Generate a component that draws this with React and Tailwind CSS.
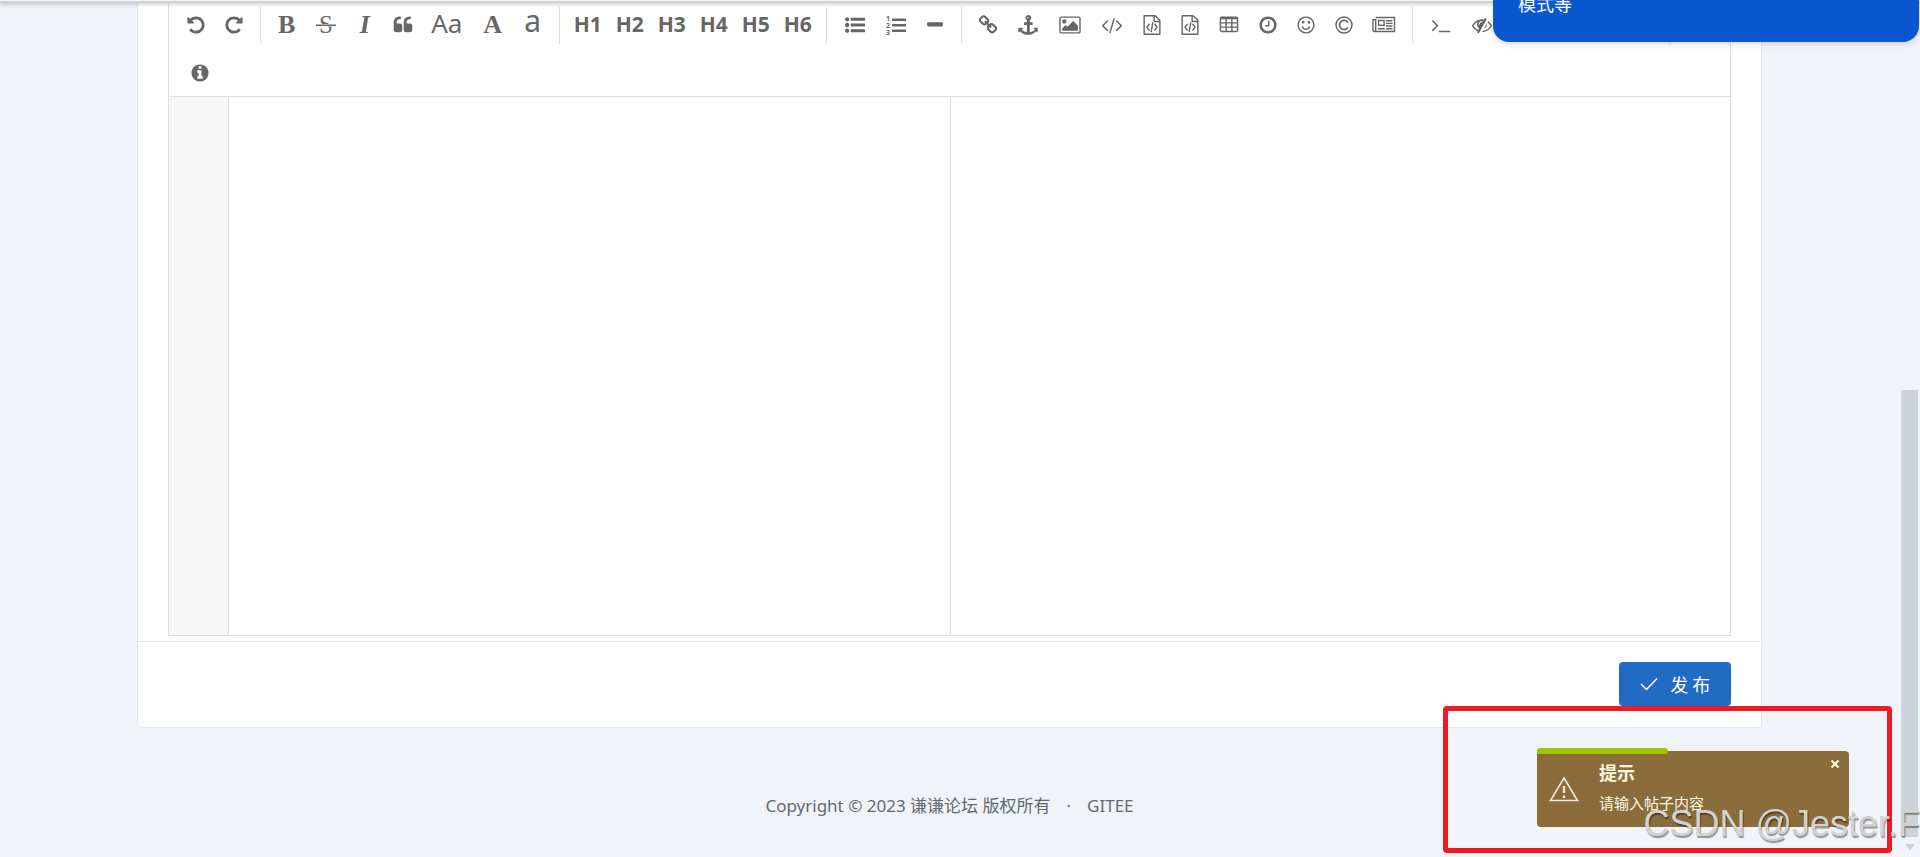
import clsx from 'clsx';

const ICONS = {
  undo: 'M1664 896q0 156-61 298t-164 245-245 164-298 61q-172 0-327-72.5t-264-204.5q-7-10-6.5-22.5t8.5-20.5l137-138q10-9 25-9 16 2 23 12 73 95 179 147t225 52q104 0 198.5-40.5t163.5-109.5 109.5-163.5 40.5-198.5-40.5-198.5-109.5-163.5-163.5-109.5-198.5-40.5q-98 0-188 35.5t-160 101.5l137 138q31 30 14 69-17 40-59 40h-448q-26 0-45-19t-19-45v-448q0-42 40-59 39-17 69 14l130 129q107-101 244.5-156.5t284.5-55.5q156 0 298 61t245 164 164 245 61 298z',
  redo: 'M1664 256v448q0 26-19 45t-45 19h-448q-42 0-59-40-17-39 14-69l138-138q-148-137-349-137-104 0-198.5 40.5t-163.5 109.5-109.5 163.5-40.5 198.5 40.5 198.5 109.5 163.5 163.5 109.5 198.5 40.5q119 0 225-52t179-147q7-10 23-12 15 0 25 9l137 138q9 8 9.5 20.5t-7.5 22.5q-109 132-264 204.5t-327 72.5q-156 0-298-61t-245-164-164-245-61-298 61-298 164-245 245-164 298-61q147 0 284.5 55.5t244.5 156.5l130-129q29-31 70-14 39 17 39 59z',
  quote: 'M832 960v384q0 80-56 136t-136 56h-384q-80 0-136-56t-56-136v-704q0-104 40.5-198.5t109.5-163.5 163.5-109.5 198.5-40.5h64q26 0 45 19t19 45v128q0 26-19 45t-45 19h-64q-106 0-181 75t-75 181v32q0 40 28 68t68 28h224q80 0 136 56t56 136zM1728 960v384q0 80-56 136t-136 56h-384q-80 0-136-56t-56-136v-704q0-104 40.5-198.5t109.5-163.5 163.5-109.5 198.5-40.5h64q26 0 45 19t19 45v128q0 26-19 45t-45 19h-64q-106 0-181 75t-75 181v32q0 40 28 68t68 28h224q80 0 136 56t56 136z',
  listUl: 'M384 1408q0 80-56 136t-136 56-136-56-56-136 56-136 136-56 136 56 56 136zm0-512q0 80-56 136t-136 56-136-56-56-136 56-136 136-56 136 56 56 136zm1408 416v192q0 13-9.5 22.5t-22.5 9.5h-1216q-13 0-22.5-9.5t-9.5-22.5v-192q0-13 9.5-22.5t22.5-9.5h1216q13 0 22.5 9.5t9.5 22.5zm-1408-928q0 80-56 136t-136 56-136-56-56-136 56-136 136-56 136 56 56 136zm1408 416v192q0 13-9.5 22.5t-22.5 9.5h-1216q-13 0-22.5-9.5t-9.5-22.5v-192q0-13 9.5-22.5t22.5-9.5h1216q13 0 22.5 9.5t9.5 22.5zm0-512v192q0 13-9.5 22.5t-22.5 9.5h-1216q-13 0-22.5-9.5t-9.5-22.5v-192q0-13 9.5-22.5t22.5-9.5h1216q13 0 22.5 9.5t9.5 22.5z',
  minus: 'M1600 736v192q0 40-28 68t-68 28h-1216q-40 0-68-28t-28-68v-192q0-40 28-68t68-28h1216q40 0 68 28t28 68z',
  link: 'M1520 1216q0-40-28-68l-208-208q-28-28-68-28-42 0-72 32 3 3 19 18.5t21.5 21.5 15 19 13 25.5 3.5 27.5q0 40-28 68t-68 28q-15 0-27.5-3.5t-25.5-13-19-15-21.5-21.5-18.5-19q-33 31-33 73 0 40 28 68l206 207q27 27 68 27 40 0 68-26l147-146q28-28 28-67zm-703-705q0-40-28-68l-206-207q-28-28-68-28-39 0-68 27l-147 146q-28 28-28 67 0 40 28 68l208 208q27 27 68 27 42 0 72-31-3-3-19-18.5t-21.5-21.5-15-19-13-25.5-3.5-27.5q0-40 28-68t68-28q15 0 27.5 3.5t25.5 13 19 15 21.5 21.5 18.5 19q33-31 33-73zm895 705q0 120-85 203l-147 146q-83 83-203 83-121 0-204-85l-206-207q-83-83-83-203 0-123 88-209l-88-88q-86 88-208 88-120 0-204-84l-208-208q-84-84-84-204t85-203l147-146q83-83 203-83 121 0 204 85l206 207q83 83 83 203 0 123-88 209l88 88q86-88 208-88 120 0 204 84l208 208q84 84 84 204z',
  anchor: 'M960 256q0-26-19-45t-45-19-45 19-19 45 19 45 45 19 45-19 19-45zm800 928v352q0 22-20 30-8 2-12 2-13 0-23-9l-93-93q-119 143-318.5 226.5t-397.5 83.5-397.5-83.5-318.5-226.5l-93 93q-9 9-23 9-4 0-12-2-20-8-20-30v-352q0-14 9-23t23-9h352q22 0 30 20 8 19-7 35l-100 100q67 91 189.5 153.5t271.5 82.5v-647h-192q-26 0-45-19t-19-45v-128q0-26 19-45t45-19h192v-163q-58-34-93-92.5t-35-128.5q0-106 75-181t181-75 181 75 75 181q0 70-35 128.5t-93 92.5v163h192q26 0 45 19t19 45v128q0 26-19 45t-45 19h-192v647q149-20 271.5-82.5t189.5-153.5l-100-100q-15-16-7-35 8-20 30-20h352q14 0 23 9t9 23z',
  code: 'M553 1399l-50 50q-10 10-23 10t-23-10l-466-466q-10-10-10-23t10-23l466-466q10-10 23-10t23 10l50 50q10 10 10 23t-10 23l-393 393 393 393q10 10 10 23t-10 23zm591-1067l-373 1291q-4 13-15.5 19.5t-23.5 2.5l-62-17q-13-4-19.5-15.5t-2.5-24.5l373-1291q4-13 15.5-19.5t23.5-2.5l62 17q13 4 19.5 15.5t2.5 24.5zm657 651l-466 466q-10 10-23 10t-23-10l-50-50q-10-10-10-23t10-23l393-393-393-393q-10-10-10-23t10-23l50-50q10-10 23-10t23 10l466 466q10 10 10 23t-10 23z',
  image: 'M576 576q0 80-56 136t-136 56-136-56-56-136 56-136 136-56 136 56 56 136zm1024 384v448h-1408v-192l320-320 160 160 512-512zm96-704h-1600q-13 0-22.5 9.5t-9.5 22.5v1216q0 13 9.5 22.5t22.5 9.5h1600q13 0 22.5-9.5t9.5-22.5v-1216q0-13-9.5-22.5t-22.5-9.5zm160 32v1216q0 66-47 113t-113 47h-1600q-66 0-113-47t-47-113v-1216q0-66 47-113t113-47h1600q66 0 113 47t47 113z',
  fileCode: 'M1596 380q28 28 48 76t20 88v1152q0 40-28 68t-68 28h-1344q-40 0-68-28t-28-68v-1600q0-40 28-68t68-28h896q40 0 88 20t76 48zm-444-244v376h376q-10-29-22-41l-313-313q-12-12-41-22zm384 1528v-1024h-416q-40 0-68-28t-28-68v-416h-768v1536h1280zM608 768q8-11 21-12.5t24 6.5l51 38q11 8 12.5 21t-6.5 24l-182 243 182 243q8 11 6.5 24t-12.5 21l-51 38q-11 8-24 6.5t-21-12.5l-226-301q-14-19 0-38zm802 301q14 19 0 38l-226 301q-8 11-21 12.5t-24-6.5l-51-38q-11-8-12.5-21t6.5-24l182-243-182-243q-8-11-6.5-24t12.5-21l51-38q11-8 24-6.5t21 12.5zm-620 461q-13-2-20.5-13t-5.5-24l138-831q2-13 13-20.5t24-5.5l63 10q13 2 20.5 13t5.5 24l-138 831q-2 13-13 20.5t-24 5.5z',
  table: 'M1728 288v1088q0 66-47 113t-113 47h-1344q-66 0-113-47t-47-113v-1088q0-66 47-113t113-47h1344q66 0 113 47t47 113zM192 384v256h384v-256zM704 384v256h384v-256zM1216 384v256h384v-256zM192 768v256h384v-256zM704 768v256h384v-256zM1216 768v256h384v-256zM192 1152v256h384v-256zM704 1152v256h384v-256zM1216 1152v256h384v-256z',
  clock: 'M1024 544v448q0 14-9 23t-23 9h-320q-14 0-23-9t-9-23v-64q0-14 9-23t23-9h224v-352q0-14 9-23t23-9h64q14 0 23 9t9 23zm416 352q0-148-73-273t-198-198-273-73-273 73-198 198-73 273 73 273 198 198 273 73 273-73 198-198 73-273zm224 0q0 209-103 385.5t-279.5 279.5-385.5 103-385.5-103-279.5-279.5-103-385.5 103-385.5 279.5-279.5 385.5-103 385.5 103 279.5 279.5 103 385.5z',
  smile: 'M1262 1075q-37 121-138 195t-228 74-228-74-138-195q-8-25 4-48.5t38-31.5q25-8 48.5 4t31.5 38q25 80 92.5 129.5t151.5 49.5 151.5-49.5 92.5-129.5q8-26 32-38t49-4 37 31.5 4 48.5zm-494-435q0 53-37.5 90.5t-90.5 37.5-90.5-37.5-37.5-90.5 37.5-90.5 90.5-37.5 90.5 37.5 37.5 90.5zm512 0q0 53-37.5 90.5t-90.5 37.5-90.5-37.5-37.5-90.5 37.5-90.5 90.5-37.5 90.5 37.5 37.5 90.5zm256 256q0-130-51-248.5t-136.5-204-204-136.5-248.5-51-248.5 51-204 136.5-136.5 204-51 248.5 51 248.5 136.5 204 204 136.5 248.5 51 248.5-51 204-136.5 136.5-204 51-248.5zm128 0q0 209-103 385.5t-279.5 279.5-385.5 103-385.5-103-279.5-279.5-103-385.5 103-385.5 279.5-279.5 385.5-103 385.5 103 279.5 279.5 103 385.5z',
  terminal: 'M649 983l-466 466q-10 10-23 10t-23-10l-50-50q-10-10-10-23t10-23l393-393-393-393q-10-10-10-23t10-23l50-50q10-10 23-10t23 10l466 466q10 10 10 23t-10 23zm1079 457v64q0 14-9 23t-23 9h-960q-14 0-23-9t-9-23v-64q0-14 9-23t23-9h960q14 0 23 9t9 23z',
  eyeSlash: 'M555 1335l78-141q-87-63-136-159t-49-203q0-121 61-225-229 117-381 353 167 258 427 375zm389-759q0-20-14-34t-34-14q-125 0-214.5 89.5t-89.5 214.5q0 20 14 34t34 14 34-14 14-34q0-86 61-147t147-61q20 0 34-14t14-34zm363-191q0 7-1 9-106 189-316 567t-315 566l-49 89q-10 16-28 16-12 0-134-70-16-10-16-28 0-12 44-87-143-65-263.5-173t-208.5-245q-20-31-20-69t20-69q153-235 380-371t496-136q89 0 180 17l54-97q10-16 28-16 5 0 18 6t31 15.5 33 18.5 31.5 18.5 19.5 11.5q16 10 16 27zm37 447q0 139-79 253.5t-209 164.5l280-502q8 45 8 84zm448 128q0 35-20 69-39 64-109 145-150 172-347.5 267t-419.5 95l74-132q212-18 392.5-137t301.5-307q-115-179-282-294l63-112q95 64 182.5 153t144.5 184q20 34 20 69z',
  info: 'M1152 1376v-160q0-14-9-23t-23-9h-96v-512q0-14-9-23t-23-9h-320q-14 0-23 9t-9 23v160q0 14 9 23t23 9h96v320h-96q-14 0-23 9t-9 23v160q0 14 9 23t23 9h448q14 0 23-9t9-23zm-128-896v-160q0-14-9-23t-23-9h-192q-14 0-23 9t-9 23v160q0 14 9 23t23 9h192q14 0 23-9t9-23zm640 416q0 209-103 385.5t-279.5 279.5-385.5 103-385.5-103-279.5-279.5-103-385.5 103-385.5 279.5-279.5 385.5-103 385.5 103 279.5 279.5 103 385.5z',
};

function Icon({ name }) {
  return (
    <svg viewBox="0 0 1792 1792" className="size-5 overflow-visible" fill="currentColor" fillRule="evenodd">
      <path d={ICONS[name]} />
    </svg>
  );
}

function ListOlIcon() {
  return (
    <svg viewBox="0 0 20 20" className="size-5 overflow-visible" fill="currentColor">
      <rect x="6" y="3.5" width="14" height="2.5" rx="0.5" />
      <rect x="6" y="9" width="14" height="2.5" rx="0.5" />
      <rect x="6" y="14.5" width="14" height="2.5" rx="0.5" />
      <g fontFamily="Noto Sans, sans-serif" fontSize="7" fontWeight="700">
        <text x="0" y="6">1</text>
        <text x="0" y="13">2</text>
        <text x="0" y="20">3</text>
      </g>
    </svg>
  );
}

function StrikeIcon() {
  return (
    <svg viewBox="0 0 20 20" className="size-5 overflow-visible" fill="currentColor">
      <text x="10" y="18" textAnchor="middle" fontFamily="Liberation Serif, serif" fontSize="25">
        S
      </text>
      <path d="M0 9.5H20V11H0Z" stroke="#ffffff" strokeWidth="1.2" paintOrder="stroke" />
    </svg>
  );
}

function CopyrightIcon() {
  return (
    <svg viewBox="0 0 20 20" className="size-5" fill="none" stroke="currentColor" strokeWidth="1.4">
      <circle cx="10" cy="10" r="8" />
      <path d="M13.9 7.4A4.6 4.6 0 1 0 13.9 12.6" strokeWidth="1.7" />
    </svg>
  );
}

function NewspaperIcon() {
  return (
    <svg viewBox="0 0 24 20" className="h-5 w-6" fill="none" stroke="currentColor" strokeWidth="1.4">
      <path d="M3.7 2.5H22.5V16.5H2.6C1.6 16.5 1 15.9 1 15V4.6H3.7V15C3.7 15.9 3.3 16.5 2.6 16.5" />
      <rect x="6.5" y="5.5" width="5.6" height="4.8" />
      <path d="M14 5.8H20.5M14 8.4H20.5M14 11H20.5M5.8 13.8H12.8M14 13.8H20.5" />
    </svg>
  );
}

const TOOL_GROUPS = [
  [
    { label: '撤销', icon: 'undo' },
    { label: '重做', icon: 'redo' },
  ],
  [
    { label: '粗体', text: 'B', textClass: 'text-[26px] font-bold font-["Liberation_Serif",serif]' },
    { label: '删除线', node: <StrikeIcon />, width: 'w-10' },
    { label: '斜体', text: 'I', textClass: 'text-[26px] italic font-bold font-["Liberation_Serif",serif]' },
    { label: '引用', icon: 'quote' },
    { label: '单词首字母大写', text: 'Aa', width: 'w-[50px]', textClass: 'pb-1 text-[26px]' },
    { label: '转大写', text: 'A', width: 'w-[42px]', textClass: 'text-[26px] font-bold font-["Liberation_Serif",serif]' },
    { label: '转小写', text: 'a', textClass: 'pb-2 text-[30px]' },
  ],
  ['H1', 'H2', 'H3', 'H4', 'H5', 'H6'].map((h) => ({
    label: h,
    text: h,
    width: 'w-[42px]',
    textClass: 'text-[21px] font-bold',
  })),
  [
    { label: '无序列表', icon: 'listUl', width: 'w-[42px]' },
    { label: '有序列表', node: <ListOlIcon />, width: 'w-10' },
    { label: '横线', icon: 'minus' },
  ],
  [
    { label: '链接', icon: 'link', width: 'w-[38px]' },
    { label: '引用链接', icon: 'anchor', width: 'w-[42px]' },
    { label: '图片', icon: 'image', width: 'w-[42px]' },
    { label: '行内代码', icon: 'code', width: 'w-[42px]' },
    { label: '预格式文本', icon: 'fileCode' },
    { label: '代码块', icon: 'fileCode' },
    { label: '表格', icon: 'table', width: 'w-10' },
    { label: '日期时间', icon: 'clock' },
    { label: '表情', icon: 'smile' },
    { label: 'HTML 实体字符', node: <CopyrightIcon /> },
    { label: '插入分页符', node: <NewspaperIcon />, width: 'w-[42px]' },
  ],
  [
    { label: '跳转到行', icon: 'terminal', width: 'w-[42px]' },
    { label: '关闭实时预览', icon: 'eyeSlash', width: 'w-10' },
    { label: '全窗口预览', icon: 'image', width: 'w-10' },
    { label: '全屏', icon: 'table', width: 'w-10' },
    { label: '清空', icon: 'minus', width: 'w-10' },
    { label: '搜索', icon: 'clock', width: 'w-10' },
  ],
];

function ToolButton({ tool }) {
  return (
    <button
      type="button"
      aria-label={tool.label}
      className={clsx('flex h-[37px] items-center justify-center pb-0.5 leading-none', tool.width ?? 'w-[38px]')}
    >
      {tool.text && <span className={tool.textClass}>{tool.text}</span>}
      {tool.icon && <Icon name={tool.icon} />}
      {tool.node}
    </button>
  );
}

function Toolbar() {
  return (
    <div className="flex flex-wrap gap-y-[11px] border-b border-[#dddddd] px-2 pt-[7px] pb-1 text-[#666666]">
      {TOOL_GROUPS.map((group, i) => (
        <div key={i} className="flex">
          {group.map((tool, j) => (
            <ToolButton key={j} tool={tool} />
          ))}
          <div className="flex w-[15px] justify-center">
            <span className="w-px bg-[#dddddd]" />
          </div>
        </div>
      ))}
      <ToolButton tool={{ label: '使用帮助', icon: 'smile' }} />
      <ToolButton tool={{ label: '关于', icon: 'info', width: 'w-[46px]' }} />
    </div>
  );
}

function Editor() {
  return (
    <div className="border border-t-0 border-[#dddddd] bg-white">
      <Toolbar />
      <div className="flex h-[538px]">
        <div className="w-[60px] border-r border-[#dddddd] bg-[#f7f7f7]" />
        <textarea aria-label="帖子内容" className="flex-1 resize-none outline-none" />
        <div className="w-1/2 border-l border-[#dddddd]" />
      </div>
    </div>
  );
}

function Toast() {
  return (
    <div className="absolute right-[71px] bottom-[30px] flex h-[76px] w-[312px] items-center rounded bg-[#8a6d3b] text-[#fcf8e3]">
      <div className="absolute -top-[3px] left-0 h-1.5 w-[131px] rounded-full bg-[#9ec600]" />
      <svg viewBox="0 0 30 26" className="ml-3 h-[26px] w-[30px]" fill="none" stroke="#f3ead9" strokeWidth="1.6">
        <path d="M15 2L28.5 24.5H1.5Z" />
        <path d="M15 10V17M15 19.5V22" strokeWidth="2.4" />
      </svg>
      <div className="mb-1 ml-5 flex flex-col gap-2">
        <h4 className="text-[18px] leading-6 font-bold">提示</h4>
        <p className="text-[15px] leading-5">请输入帖子内容</p>
      </div>
      <button type="button" aria-label="关闭" className="absolute top-[7px] right-2 flex size-3 items-center justify-center">
        <svg viewBox="0 0 8 8" className="size-2" stroke="currentColor" strokeWidth="2">
          <path d="M0.5 0.5L7.5 7.5M7.5 0.5L0.5 7.5" />
        </svg>
      </button>
    </div>
  );
}

function App() {
  return (
    <div className='relative flex h-screen overflow-hidden bg-[#f0f4f9] font-["Noto_Sans","Noto_Sans_CJK_SC",sans-serif]'>
      <main className="min-w-0 flex-1">
        <section className="mx-auto w-[85.6%] rounded-b border border-t-0 border-[#e4e6ea] bg-white">
          <div className="px-[30px] pb-[5px]">
            <Editor />
          </div>
          <div className="flex justify-end border-t border-[#e4e6ea] px-[30px] pt-5 pb-[21px]">
            <button
              type="button"
              className="flex h-11 w-28 items-center justify-center gap-3 rounded bg-[#206bc4] text-[18px] text-white"
            >
              <svg viewBox="0 0 18 14" className="h-3.5 w-[18px]" fill="none" stroke="currentColor" strokeWidth="1.5">
                <path d="M1 7L6.5 12.5L17 1.5" />
              </svg>
              <span className="flex gap-1 pt-0.5">
                <span>发</span>
                <span>布</span>
              </span>
            </button>
          </div>
        </section>
        <footer className="mt-[62px] flex justify-center gap-4 text-[17px] leading-8 text-[#626976]">
          <span>Copyright © 2023 谦谦论坛 版权所有</span>
          <span>·</span>
          <a href="#gitee">GITEE</a>
        </footer>
      </main>

      <div className="flex w-[21px] flex-col items-center justify-end">
        <div className="h-[447px] w-[17px] bg-[#cdd2d8]" />
        <svg viewBox="0 0 10 6" className="my-[7px] h-1.5 w-2.5" fill="#cdd2d8">
          <path d="M0 0H10L5 6Z" />
        </svg>
      </div>

      <div className="absolute inset-x-0 top-0 h-[3px] border-t border-[#f5f5f5] bg-[#d2d2d2] shadow-[0_1px_4px_rgba(0,0,0,0.25)]" />
      <div className="absolute top-0 right-px h-[42px] w-[426px] overflow-hidden rounded-b-2xl bg-[#0b57d0] shadow-md">
        <p className="-mt-[8px] ml-[25px] text-[18px] leading-6 text-white">模式等</p>
      </div>

      <Toast />
      <div className="absolute right-7 bottom-1 h-[147px] w-[449px] rounded-sm border-[5px] border-[#ed1c24]" />
      <p className='absolute right-0 bottom-[11px] text-[36px] leading-[44px] whitespace-nowrap text-[#d2d2d2] [text-shadow:1px_2px_1px_rgba(0,0,0,0.4)] font-["Liberation_Sans",sans-serif]'>
        CSDN @Jester.F
      </p>
    </div>
  );
}

export default App;
